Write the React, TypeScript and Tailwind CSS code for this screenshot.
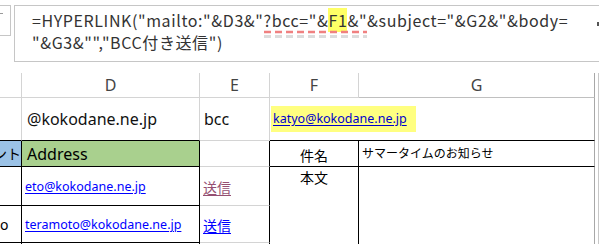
import React from "react";

const formulaFont = "font-['Noto_Sans_CJK_JP',sans-serif]";
const cellFont = "font-['Noto_Sans','Noto_Sans_CJK_JP',sans-serif]";

const FormulaBar = () => {
  return (
    <div className="flex h-[62px] pt-[5px]">
      <div className="w-[14px] shrink-0">
        <div className="relative h-[31px] w-[11px] border-t border-r border-b border-[#c6c6c6]">
          <div className="absolute left-0 top-[7px] h-px w-[3px] bg-[#9a9a9a]" />
        </div>
      </div>
      <div
        className={`relative flex-1 border-t border-l border-b border-[#c6c6c6] pl-[17px] pt-[3px] text-[16px] leading-[22px] tracking-[0.6px] text-[#333] whitespace-nowrap ${formulaFont}`}
      >
        <div>
          {'=HYPERLINK("mailto:"&D3&"'}
          <span className="relative">
            {'?bcc="&'}
            <span className="bg-[#ffff66]">F1</span>
            {'&"'}
            <svg className="absolute left-0 top-[22px] h-[9px] w-full" preserveAspectRatio="none">
              <line x1="0" y1="2" x2="100%" y2="2" stroke="#f08080" strokeWidth="2.5" strokeDasharray="7 4" />
              <line x1="0" y1="6.5" x2="100%" y2="6.5" stroke="#dcdcdc" strokeWidth="3" strokeDasharray="7 4" />
            </svg>
          </span>
          {'&subject="&G2&"&body='}
        </div>
        <div>{'"&G3&"","BCC付き送信")'}</div>
        <div className="absolute right-0 top-[16px] h-[4px] w-[2px] bg-[#555]" />
      </div>
    </div>
  );
};

const Sheet = () => {
  const gray = "border-[#d4d4d4]";
  return (
    <div
      className={`mt-[11px] grid grid-cols-[22px_178px_70px_89px_236px_4px] grid-rows-[25px_43px_26px_39px_37px_20px] ${cellFont}`}
    >
      {/* header */}
      <div className={`border-r border-b ${gray}`} />
      <div className={`flex items-center justify-center border-r border-b ${gray} text-[16px] text-[#444]`}>D</div>
      <div className={`flex items-center justify-center border-r border-b ${gray} text-[16px] text-[#444]`}>E</div>
      <div className={`flex items-center justify-center border-r border-b ${gray} text-[16px] text-[#444]`}>F</div>
      <div className={`flex items-center justify-center border-r border-b border-b-[#c0c0c0] border-r-[#a8a8a8] text-[16px] text-[#444]`}>G</div>
      <div className="border-r border-[#c8c8c8]" />

      {/* row 1 */}
      <div className={`border-r ${gray} border-b border-b-black`} />
      <div className={`flex items-center pl-[5px] border-r ${gray} border-b border-b-black text-[16px] text-[#111]`}>
        @kokodane.ne.jp
      </div>
      <div className={`flex items-center pl-[4px] border-r ${gray} border-b ${gray} text-[16px] text-[#111]`}>bcc</div>
      <div className="col-span-2 flex items-center pl-[1px] border-b border-b-black border-r border-r-[#a8a8a8]">
        <div className="flex h-[26px] w-[145px] items-center bg-[#ffff80] pl-[2px]">
          <span className="text-[12.5px] text-[#0000cc] underline underline-offset-2">katyo@kokodane.ne.jp</span>
        </div>
      </div>
      <div className="border-r border-[#c8c8c8]" />

      {/* row 2 */}
      <div className="flex items-center justify-end overflow-hidden bg-[#9bc2e6] border-r border-b border-black text-[14px] whitespace-nowrap text-black">
        ント
      </div>
      <div className="flex items-center pl-[5px] bg-[#a9d08e] border-r border-b border-black text-[16px] text-black">
        Address
      </div>
      <div className={`border-r border-r-black border-b ${gray}`} />
      <div className="flex items-end justify-center pb-[1px] border-r border-b border-black text-[14px] leading-[18px] text-black">
        件名
      </div>
      <div className="flex items-center pl-[3px] border-b border-b-black border-r border-r-[#a8a8a8] text-[12px] text-black">
        サマータイムのお知らせ
      </div>
      <div className="border-r border-[#c8c8c8]" />

      {/* row 3 */}
      <div className="border-r border-b border-black" />
      <div className="flex items-center pl-[3px] pt-[3px] border-r border-b border-black">
        <span className="text-[12.5px] text-[#0000ff] underline underline-offset-2">eto@kokodane.ne.jp</span>
      </div>
      <div className={`flex items-center pl-[3px] pt-[3px] border-r border-r-black border-b ${gray}`}>
        <span className="text-[14px] text-[#954f72] underline underline-offset-2">送信</span>
      </div>
      <div className="row-span-3 flex justify-center pt-[1px] border-r border-black text-[14px] leading-[20px] text-black">
        本文
      </div>
      <div className="row-span-3 border-r border-r-[#a8a8a8]" />
      <div className="row-span-3 border-r border-[#c8c8c8]" />

      {/* row 4 */}
      <div className="flex items-center border-r border-b border-black text-[14px] text-black overflow-hidden">o</div>
      <div className="flex items-center pl-[3px] pt-[3px] border-r border-b border-black">
        <span className="text-[12.5px] text-[#0000ff] underline underline-offset-2">teramoto@kokodane.ne.jp</span>
      </div>
      <div className={`flex items-center pl-[3px] pt-[3px] border-r border-r-black border-b ${gray}`}>
        <span className="text-[14px] text-[#0000ff] underline underline-offset-2">送信</span>
      </div>

      {/* row 5 */}
      <div className="border-r border-black" />
      <div className="border-r border-black" />
      <div className="border-r border-black" />
    </div>
  );
};

const App = () => {
  return (
    <div className="h-[244px] w-[599px] overflow-hidden bg-white">
      <FormulaBar />
      <Sheet />
    </div>
  );
};

export default App;
